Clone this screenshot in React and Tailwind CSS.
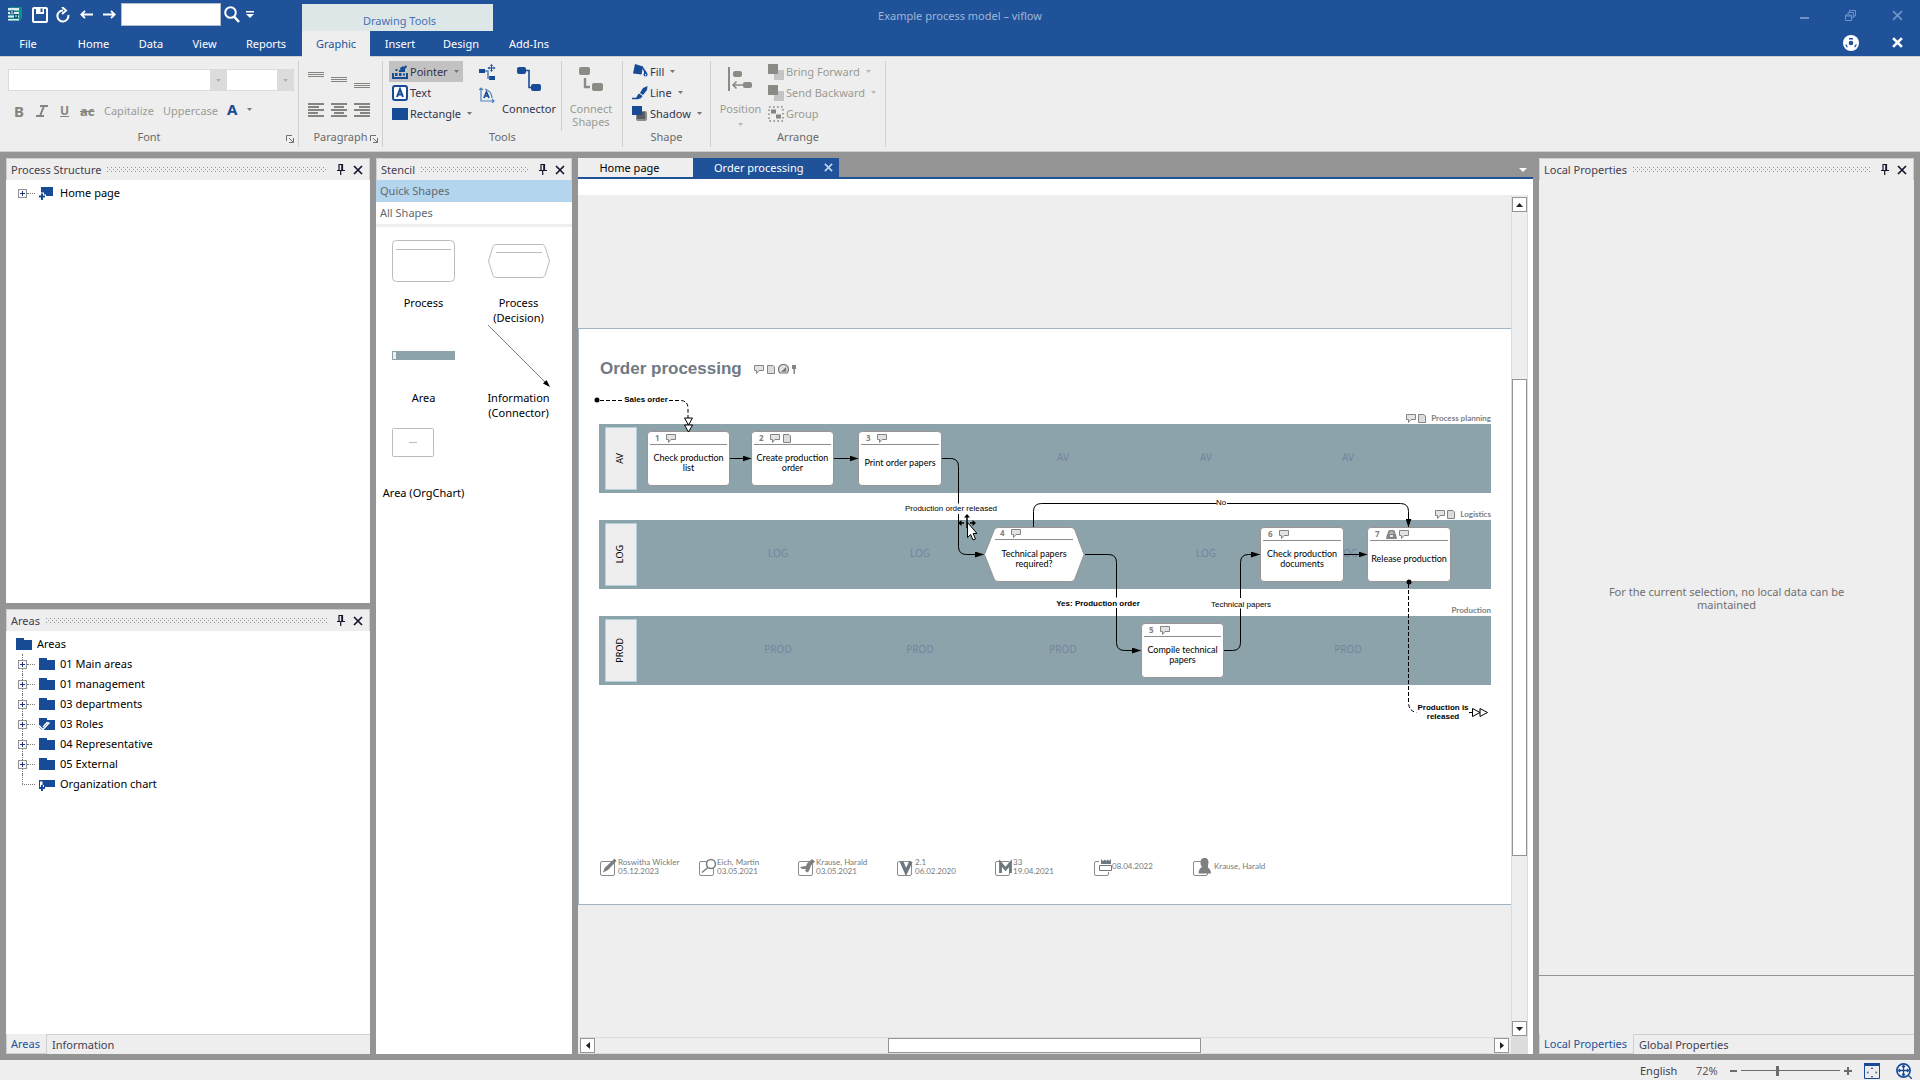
import React from "react";

/* ---------- small shared glyphs ---------- */

function Caret({ className = "text-[#777]" }) {
  return (
    <svg width="5" height="3" viewBox="0 0 5 3" className={`shrink-0 ${className}`} aria-hidden="true">
      <path d="M0 0h5L2.5 3z" fill="currentColor" />
    </svg>
  );
}

function Cross({ size = 9, width = 2, className = "" }) {
  return (
    <svg width={size} height={size} viewBox="0 0 10 10" className={className} aria-hidden="true">
      <path d="M1 1l8 8M9 1l-8 8" stroke="currentColor" strokeWidth={width} fill="none" />
    </svg>
  );
}

function Pin() {
  return (
    <svg width="8" height="11" viewBox="0 0 8 11" aria-hidden="true">
      <path d="M2 6V.5h3.500V6M4.800 1v5M0 6.500h8M3.700 7v4" stroke="#14142c" strokeWidth="1.200" fill="none" />
    </svg>
  );
}

function Launcher() {
  return (
    <button aria-label="More options" className="absolute bottom-0 right-1">
      <svg width="8" height="8" viewBox="0 0 8 8" aria-hidden="true">
        <path d="M.5 6V.5H6M3 3l4 4M7.500 3v4.500H3" stroke="#6f6f6f" fill="none" />
      </svg>
    </button>
  );
}

/* ---------- title bar ---------- */

function QuickAccess() {
  return (
    <div className="flex h-[29px] w-[302px] items-center pl-[7px] text-white">
      <svg width="15" height="15" viewBox="0 0 15 15" className="mr-[10px]" aria-label="viflow">
        <path d="M2 0h13v11l-3 3H2z" fill="#0f8f86" />
        <path d="M1 1h11v2.500H1zM1 5h11v2H1zM1 8.500h11v2H1zM1 12h11v1.500H1z" fill="#d9edf2" />
        <path d="M3 3.500h4v3H3zM7 7h4v4H7z" fill="#17468a" />
        <path d="M4 4.500h2v1H4zM8 8.500h2v1H8z" fill="#fff" />
      </svg>
      <button aria-label="Save" className="mr-2">
        <svg width="16" height="16" viewBox="0 0 16 16" aria-hidden="true">
          <rect x="1" y="1" width="14" height="14" rx="1" fill="none" stroke="#fff" strokeWidth="2" />
          <path d="M4 1h8v6H4z" fill="#fff" />
          <path d="M8.500 1.500h2v3.500h-2z" fill="#20529a" />
        </svg>
      </button>
      <button aria-label="Redo" className="mr-[10px]">
        <svg width="14" height="16" viewBox="0 0 14 16" aria-hidden="true">
          <path d="M7 3.500a5.500 5.500 0 1 0 5.300 4.500M6 0l4 3.500L6 7" stroke="#fff" strokeWidth="2" fill="none" />
        </svg>
      </button>
      <button aria-label="Back" className="mr-[10px]">
        <svg width="13" height="9" viewBox="0 0 13 9" aria-hidden="true">
          <path d="M13 4.500H1.500M5 .8L1.300 4.500 5 8.200" stroke="#fff" strokeWidth="1.800" fill="none" />
        </svg>
      </button>
      <button aria-label="Forward" className="mr-[5px]">
        <svg width="13" height="9" viewBox="0 0 13 9" aria-hidden="true">
          <path d="M0 4.500h11.500M8 .8l3.700 3.700L8 8.200" stroke="#fff" strokeWidth="1.800" fill="none" />
        </svg>
      </button>
      <input aria-label="Search" className="h-[23px] w-[100px] border border-[#b5bccb] bg-white px-1 text-[11px] text-black outline-none" />
      <button aria-label="Find" className="ml-[3px]">
        <svg width="16" height="17" viewBox="0 0 16 17" aria-hidden="true">
          <circle cx="6.500" cy="6.500" r="5.300" fill="none" stroke="#fff" strokeWidth="2" />
          <path d="M10 10.500l5 5.500" stroke="#fff" strokeWidth="2.600" />
        </svg>
      </button>
      <button aria-label="Customize quick access" className="ml-[6px]">
        <svg width="8" height="7" viewBox="0 0 8 7" aria-hidden="true">
          <path d="M0 0h8v1.500H0zM0 3h8L4 7z" fill="#fff" />
        </svg>
      </button>
    </div>
  );
}

function MenuItem({ className, children }) {
  return <button className={`h-[25px] pt-px text-center text-white ${className}`}>{children}</button>;
}

function TitleBar() {
  return (
    <header className="relative bg-[#20529a]">
      <div className="flex h-[31px]">
        <QuickAccess />
        <div className="mt-1 flex h-[27px] w-[191px] items-center justify-center bg-[#dde7e8] pt-[6px] pl-1 text-[#4571b5]">Drawing Tools</div>
        <h1 className="absolute inset-x-0 top-2 mx-auto w-fit text-[#9fb6d6]">Example process model – viflow</h1>
        <div className="ml-auto flex h-[31px] items-center text-[#6f93c6]">
          <button aria-label="Minimize" className="flex w-[46px] justify-center">
            <span className="mt-1 h-[2px] w-[9px] bg-current" />
          </button>
          <button aria-label="Restore" className="flex w-[47px] justify-center">
            <svg width="11" height="11" viewBox="0 0 11 11" aria-hidden="true">
              <path d="M.5 5h6v5.500h-6zM.5 6h6M3 4.500V2.500h5.500v5H7M4.500 2V.5h6V6H9" stroke="currentColor" fill="none" />
            </svg>
          </button>
          <button aria-label="Close" className="flex w-[46px] justify-center">
            <Cross size={11} width={1.6} />
          </button>
        </div>
      </div>
      <div className="flex h-[25px]">
        <MenuItem className="w-14">File</MenuItem>
        <MenuItem className="w-[75px]">Home</MenuItem>
        <MenuItem className="w-10">Data</MenuItem>
        <MenuItem className="w-[67px]">View</MenuItem>
        <MenuItem className="mr-2 w-14">Reports</MenuItem>
        <button className="h-[26px] w-[68px] bg-[#eee] text-center text-[#20529a]">Graphic</button>
        <MenuItem className="w-[60px]">Insert</MenuItem>
        <MenuItem className="w-[62px]">Design</MenuItem>
        <MenuItem className="w-[74px]">Add-Ins</MenuItem>
        <div className="ml-auto flex items-center pb-[2px] text-white">
          <button aria-label="Help" className="flex w-[47px] justify-center">
            <svg width="16" height="16" viewBox="0 0 16 16" aria-hidden="true">
              <circle cx="8" cy="8" r="8" fill="#fff" />
              <circle cx="8" cy="8" r="2.300" fill="#20529a" />
              <path d="M6 3h4v1.500H6zM3 9l1.800 2.500-.8 1.200L2.300 10zM13 9l-1.800 2.500.8 1.200 1.700-2.700z" fill="#20529a" />
            </svg>
          </button>
          <button aria-label="Close document" className="flex w-[46px] justify-center">
            <Cross size={11} width={2.4} />
          </button>
        </div>
      </div>
    </header>
  );
}

/* ---------- ribbon ---------- */

function Group({ label, className, launcher, children }) {
  return (
    <section className={`flex flex-col border-r border-[#cfcfcf] ${className}`}>
      <div className="h-[71px]">{children}</div>
      <div className="relative h-3 text-center leading-3 text-[#6a6a6a]">
        {label}
        {launcher && <Launcher />}
      </div>
    </section>
  );
}

function RowButton({ icon, label, caret, disabled, active }) {
  return (
    <button
      disabled={disabled}
      className={`flex h-[21px] w-fit items-center gap-[2px] whitespace-nowrap pl-[3px] pr-1 ${disabled ? "text-[#9b9b93]" : "text-[#33334a]"} ${active ? "bg-[#c2c2c2]" : ""}`}
    >
      <span className="flex w-4 shrink-0 justify-center">{icon}</span>
      <span className="pr-1">{label}</span>
      {caret && <Caret className={disabled ? "text-[#bfb4bb]" : "text-[#7d7377]"} />}
    </button>
  );
}

function VAlignIcon({ className }) {
  return (
    <svg width="16" height="5" viewBox="0 0 16 5" className={className} aria-hidden="true">
      <path d="M0 .5h16M0 2.500h16M0 4.500h16" stroke="#85857f" />
    </svg>
  );
}

const ALIGN = {
  left: "M0 1h16M0 4h11M0 7h16M0 10h10M0 13h16",
  center: "M0 1h16M3 4h10M0 7h16M3 10h10M0 13h16",
  right: "M0 1h16M5 4h11M0 7h16M6 10h10M0 13h16",
};

function AlignIcon({ side }) {
  return (
    <button aria-label={`Align ${side}`}>
      <svg width="16" height="14" viewBox="0 0 16 14" aria-hidden="true">
        <path d={ALIGN[side]} stroke="#85857f" strokeWidth="1.800" />
      </svg>
    </button>
  );
}

const BLUE = "#174b95";

const PointerIcon = (
  <svg width="16" height="14" viewBox="0 0 16 14" aria-hidden="true">
    <path d="M1 8v5h14V8" stroke={BLUE} strokeWidth="2" fill="none" />
    <path d="M3 8h2.500v3H3zM7 8h2.500v3H7zM3.500 4h2v2h-2zM7 5h2v2H7zM11 8.500h2v2h-2z" fill={BLUE} />
    <path d="M8 3l3-2 1 1 2-2 1 2-2 2v3l-4 0z" fill={BLUE} />
  </svg>
);
const TextIcon = (
  <svg width="16" height="16" viewBox="0 0 16 16" aria-hidden="true">
    <rect x="1" y="1" width="14" height="14" rx="2" fill="#fff" stroke={BLUE} strokeWidth="2" />
    <path d="M5 12l3-8 3 8M6 9.500h4" stroke={BLUE} strokeWidth="2" fill="none" />
  </svg>
);
const RectIcon = (
  <svg width="16" height="12" viewBox="0 0 16 12" aria-hidden="true">
    <path d="M0 0h16v12H0z" fill={BLUE} />
  </svg>
);
const FillIcon = (
  <svg width="16" height="15" viewBox="0 0 16 15" aria-hidden="true">
    <path d="M3 0l8 2.500-1.500 8L1 9.500z" fill={BLUE} />
    <path d="M10 3c2 2 3 4 3 6" stroke={BLUE} strokeWidth="1.500" fill="none" />
    <path d="M13.500 6.500c1.300 2 2 3 2 4a2 2 0 0 1-4 0c0-1 .8-2 2-4z" fill={BLUE} />
    <path d="M13 10h1v1.500h-1z" fill="#fff" />
  </svg>
);
const LineIcon = (
  <svg width="16" height="14" viewBox="0 0 16 14" aria-hidden="true">
    <path d="M15.500 0L15 4l-4 5-3-2 3-5zM7 7.500l3.500 2.500c-1 3-4 3.500-7.500 2.500 2-.5 2-3.500 4-5z" fill={BLUE} />
    <path d="M0 12.500h6" stroke={BLUE} strokeWidth="1.500" />
  </svg>
);
const ShadowIcon = (
  <svg width="16" height="16" viewBox="0 0 16 16" aria-hidden="true">
    <rect x="4" y="5" width="11" height="10" rx="2" fill="#8b8b90" />
    <rect x="5" y="6" width="8" height="7" fill="#5b5b62" />
    <path d="M0 0h10v9H0z" fill={BLUE} />
  </svg>
);
const StackIcon = (
  <svg width="16" height="16" viewBox="0 0 16 16" aria-hidden="true">
    <path d="M6 6h10v10H6z" fill="#c4c3c6" />
    <path d="M0 0h10v10H0z" fill="#8b8b86" />
  </svg>
);
const GroupIcon = (
  <svg width="16" height="16" viewBox="0 0 16 16" aria-hidden="true">
    <rect x="1" y="1" width="14" height="14" fill="none" stroke="#85857f" strokeWidth="1.500" strokeDasharray="1.600 2.400" />
    <path d="M3 3.500h5v4H3zM8 8.500h5v4H8z" fill="#85857f" />
  </svg>
);

function Ribbon() {
  return (
    <div className="flex h-24 shrink-0 border-y border-[#cfcfcf] bg-[#eee] pb-1 pt-1">
      <Group label="Font" className="w-[299px] pb-1" launcher>
        <div className="flex pl-2 pt-2">
          <div className="flex h-[22px] border border-[#dcdcdc] bg-white">
            <input aria-label="Font name" className="w-[201px] px-1 outline-none" />
            <button aria-label="Choose font" className="flex w-4 items-center justify-center bg-[#dcdcdc]">
              <Caret className="text-[#b3b3b3]" />
            </button>
          </div>
          <div className="flex h-[22px] border border-l-0 border-[#dcdcdc] bg-white">
            <input aria-label="Font size" className="w-[50px] px-1 outline-none" />
            <button aria-label="Choose size" className="flex w-4 items-center justify-center bg-[#dcdcdc]">
              <Caret className="text-[#b3b3b3]" />
            </button>
          </div>
        </div>
        <div className="flex items-center pl-[13px] pt-[9px] text-[#85857f]">
          <button aria-label="Bold" className="w-[21px] pl-px text-left text-[15px] font-bold leading-[22px]">B</button>
          <button aria-label="Italic" className="flex w-[26px] pl-[2px]">
            <svg width="12" height="12" viewBox="0 0 12 12" aria-hidden="true">
              <path d="M4 1h8M0 11h8M8 1L4 11" stroke="#85857f" strokeWidth="2" />
            </svg>
          </button>
          <button aria-label="Underline" className="w-5 text-left text-[12px] font-bold leading-[22px] underline">U</button>
          <button aria-label="Strikethrough" className="w-6 text-left text-[13px] font-bold leading-[22px] line-through">ac</button>
          <button className="w-[59px] text-left text-[#9b9b93]">Capitalize</button>
          <button className="w-[64px] text-left text-[#9b9b93]">Uppercase</button>
          <button aria-label="Font color" className="flex items-center gap-[10px] pb-1 text-[15px] font-bold leading-[18px] text-[#174b95]">
            A<Caret />
          </button>
        </div>
      </Group>
      <Group label="Paragraph" className="w-[84px] pb-1" launcher>
        <div className="flex h-8 gap-[7px] pl-[9px] pt-[11px]">
          <button aria-label="Align top" className="h-fit"><VAlignIcon /></button>
          <button aria-label="Align middle" className="h-fit pt-[5px]"><VAlignIcon /></button>
          <button aria-label="Align bottom" className="h-fit pt-[11px]"><VAlignIcon /></button>
        </div>
        <div className="flex gap-[7px] pl-[9px] pt-[10px]">
          <AlignIcon side="left" />
          <AlignIcon side="center" />
          <AlignIcon side="right" />
        </div>
      </Group>
      <Group label="Tools" className="w-[240px] pb-1">
        <div className="flex">
          <div className="w-[90px] pl-[6px]">
            <RowButton active icon={PointerIcon} label="Pointer" caret />
            <RowButton icon={TextIcon} label="Text" />
            <RowButton icon={RectIcon} label="Rectangle" caret />
          </div>
          <div className="flex w-7 flex-col items-center gap-[6px] pt-[3px]">
            <button aria-label="Move connector">
              <svg width="17" height="17" viewBox="0 0 17 17" aria-hidden="true">
                <path d="M0 5h6v4H0zM10 12h6v4h-6z" fill={BLUE} />
                <path d="M6 7h3v7h2" stroke="#4b83bb" strokeWidth="1.500" fill="none" />
                <path d="M12.500 1v6M9.500 4h6" stroke={BLUE} fill="none" />
                <path d="M12.500 0l1.500 2h-3zM12.500 8l1.500-2h-3zM8.500 4l2-1.500v3zM16.500 4l-2-1.500v3z" fill={BLUE} />
              </svg>
            </button>
            <button aria-label="Rotate text">
              <svg width="16" height="16" viewBox="0 0 16 16" aria-hidden="true">
                <path d="M2 1v13h13M0 3l2-2 2 2M13 12l2 2-2 2M6 2a10 10 0 0 1 7 9" stroke="#4b83bb" fill="none" strokeWidth="1.200" />
                <path d="M5 11l2.500-6 2.500 6M6 9h3" stroke={BLUE} strokeWidth="1.700" fill="none" />
              </svg>
            </button>
          </div>
          <button className="flex h-[70px] w-[61px] flex-col items-center border-r border-[#cfcfcf] pr-1 pt-[6px] text-[#33334a]">
            <svg width="24" height="24" viewBox="0 0 24 24" aria-hidden="true">
              <rect x="0" y="0" width="9" height="7" rx="2" fill={BLUE} />
              <rect x="14" y="17" width="10" height="7" rx="2" fill={BLUE} />
              <path d="M9 3.500h3v17h3" stroke={BLUE} strokeWidth="1.600" fill="none" />
            </svg>
            <span className="pt-[11px] leading-[13px]">Connector</span>
          </button>
          <button disabled className="flex h-[70px] w-[58px] flex-col items-center pt-[6px] text-[#9b9b93]">
            <svg width="24" height="24" viewBox="0 0 24 24" aria-hidden="true">
              <rect x="0" y="0" width="11" height="8" rx="2" fill="#8b8b86" />
              <rect x="13" y="16" width="11" height="8" rx="2" fill="#8b8b86" />
              <path d="M6 11v9h5" stroke="#8b8b86" strokeWidth="2.400" fill="none" />
            </svg>
            <span className="pt-[11px] leading-[13px]">Connect<br />Shapes</span>
          </button>
        </div>
      </Group>
      <Group label="Shape" className="w-[88px] pb-1">
        <div className="pl-[6px]">
          <RowButton icon={FillIcon} label="Fill" caret />
          <RowButton icon={LineIcon} label="Line" caret />
          <RowButton icon={ShadowIcon} label="Shadow" caret />
        </div>
      </Group>
      <Group label="Arrange" className="w-[175px] pb-1">
        <div className="flex">
          <button disabled className="flex w-[54px] flex-col items-center pl-[5px] pt-[6px] text-[#9b9b93]">
            <svg width="25" height="24" viewBox="0 0 25 24" aria-hidden="true">
              <path d="M1 0v24" stroke="#8b8b86" strokeWidth="2" />
              <rect x="5" y="4" width="9" height="6" rx="2" fill="#8b8b86" />
              <rect x="15" y="15" width="9" height="6" rx="2" fill="#8b8b86" />
              <path d="M15 18H5M8.500 14.500L5 18l3.500 3.500" stroke="#8b8b86" strokeWidth="1.600" fill="none" />
            </svg>
            <span className="pt-[11px] leading-[13px]">Position</span>
            <Caret className="mt-2 text-[#bfb4bb]" />
          </button>
          <div>
            <RowButton disabled icon={StackIcon} label="Bring Forward" caret />
            <RowButton disabled icon={StackIcon} label="Send Backward" caret />
            <RowButton disabled icon={GroupIcon} label="Group" />
          </div>
        </div>
      </Group>
    </div>
  );
}

/* ---------- side panels ---------- */

function PanelHeader({ title, id }) {
  return (
    <div className="flex h-[22px] shrink-0 items-center border border-b-0 border-[#cfcfcf] bg-[#eee] pl-1 pr-[6px]">
      <h2 className="whitespace-nowrap text-[#44404e]">{title}</h2>
      <svg className="mx-[6px] h-[5px] min-w-0 flex-1" aria-hidden="true">
        <pattern id={id} width="4" height="4" patternUnits="userSpaceOnUse">
          <path d="M0 0h1v1H0zM2 2h1v1H2z" fill="#8f8f8f" />
        </pattern>
        <rect width="100%" height="100%" fill={`url(#${id})`} />
      </svg>
      <button aria-label={`Pin ${title}`} className="mx-1">
        <Pin />
      </button>
      <button aria-label={`Close ${title}`} className="ml-1 text-[#14142c]">
        <Cross size={10} width={1.7} />
      </button>
    </div>
  );
}

function PanelTabs({ active, other }) {
  return (
    <div className="flex h-5 shrink-0 bg-[#eee]">
      <button className="border border-t-0 border-[#cfcfcf] pl-1 pr-[6px] text-[#20529a]">{active}</button>
      <button className="flex-1 border-t border-[#cfcfcf] pl-[5px] text-left text-[#44404e]">{other}</button>
    </div>
  );
}

function Expander() {
  return (
    <button aria-label="Expand" className="relative shrink-0">
      <svg width="9" height="9" viewBox="0 0 9 9" aria-hidden="true">
        <rect x=".5" y=".5" width="8" height="8" fill="#fafafa" stroke="#919191" />
        <path d="M2 4.500h5M4.500 2v5" stroke="#26337f" />
      </svg>
    </button>
  );
}

function TreeIcon({ kind }) {
  return (
    <svg width="16" height="14" viewBox="0 0 16 14" className="shrink-0" aria-hidden="true">
      {kind === "page" && (
        <>
          <path d="M2 1h12v9H2z" fill={BLUE} />
          <path d="M1 6.500h4v2h2v3H0v-3h1z" fill="#fff" />
          <path d="M0 9.500h2v-2h2v2h2v2H4V14H2v-2.500H0z" fill={BLUE} />
        </>
      )}
      {kind === "chart" && (
        <>
          <path d="M0 3h16v7H0z" fill={BLUE} />
          <path d="M1 10V4.500h2.500V8H5v2z" fill="#fff" />
          <path d="M0 10h2V8h2v2h2v2H4v2H2v-2H0z" fill={BLUE} />
        </>
      )}
      {(kind === "folder" || kind === "roles") && <path d="M0 1h8v2h8v10H0z" fill={BLUE} />}
      {kind === "roles" && (
        <>
          <path d="M0 10l4 4H0z" fill="#fff" />
          <path d="M0 8.500l4 4L10 6l-2-.5-4 4.500" stroke="#fff" strokeWidth="1.300" fill="none" />
        </>
      )}
    </svg>
  );
}

const AREAS = [
  { label: "01 Main areas", kind: "folder" },
  { label: "01 management", kind: "folder" },
  { label: "03 departments", kind: "folder" },
  { label: "03 Roles", kind: "roles" },
  { label: "04 Representative", kind: "folder" },
  { label: "05 External", kind: "folder" },
  { label: "Organization chart", kind: "chart", leaf: true },
];

function TreeRow({ item, guide }) {
  return (
    <li className="relative flex h-5 items-center pl-3">
      {guide && (
        <span className={`absolute left-4 top-0 w-px border-l border-dotted border-[#777] ${item.leaf ? "h-[10px]" : "h-5"}`} />
      )}
      {item.leaf ? <span className="w-1" /> : <Expander />}
      <span className={`mr-1 h-px border-t border-dotted border-[#777] ${item.leaf ? "w-[13px]" : "w-2"}`} />
      <TreeIcon kind={item.kind} />
      <span className="pl-[5px] text-black">{item.label}</span>
    </li>
  );
}

function LeftColumn() {
  return (
    <div className="flex w-[364px] shrink-0 flex-col gap-[6px]">
      <section className="flex h-[445px] flex-col bg-white">
        <PanelHeader title="Process Structure" id="grip-structure" />
        <ul className="pt-[3px]">
          <TreeRow item={{ label: "Home page", kind: "page" }} />
        </ul>
      </section>
      <section className="flex min-h-0 flex-1 flex-col bg-white">
        <PanelHeader title="Areas" id="grip-areas" />
        <div className="flex-1 pt-[3px]">
          <div className="flex h-5 items-center pl-[10px] text-black">
            <TreeIcon kind="folder" />
            <span className="pl-[5px]">Areas</span>
          </div>
          <ul>
            {AREAS.map((a) => (
              <TreeRow key={a.label} item={a} guide />
            ))}
          </ul>
        </div>
        <PanelTabs active="Areas" other="Information" />
      </section>
    </div>
  );
}

function StencilItem({ label, iconClass = "pb-[3px]", children }) {
  return (
    <button className="flex h-[95px] flex-col items-center text-center text-black">
      <span className={`flex h-[66px] shrink-0 items-center ${iconClass}`}>{children}</span>
      <span className="w-[86px] leading-[15px]">{label}</span>
    </button>
  );
}

function Stencil() {
  return (
    <section className="flex w-[196px] shrink-0 flex-col bg-white">
      <PanelHeader title="Stencil" id="grip-stencil" />
      <button className="h-[22px] bg-[#b4d5ee] pl-1 text-left text-[#63686e]">Quick Shapes</button>
      <button className="h-[25px] border-b-[3px] border-[#eee] bg-white pl-1 text-left text-[#63686e]">All Shapes</button>
      <div className="grid w-[190px] grid-cols-2 pt-[2px]">
        <StencilItem label="Process">
          <svg width="63" height="42" viewBox="0 0 63 42" aria-hidden="true">
            <rect x=".5" y=".5" width="62" height="41" rx="4" fill="#fff" stroke="#bcbcbc" />
            <path d="M4 9.500h55" stroke="#bcbcbc" />
          </svg>
        </StencilItem>
        <StencilItem label="Process (Decision)">
          <svg width="62" height="34" viewBox="0 0 62 34" aria-hidden="true">
            <path d="M8 .5h46q2 0 3 2l4.500 14.500L57 31.500q-1 2-3 2H8q-2 0-3-2L.5 17 5 2.500q1-2 3-2z" fill="#fff" stroke="#bcbcbc" />
            <path d="M8 8.500h46" stroke="#bcbcbc" />
          </svg>
        </StencilItem>
        <StencilItem label="Area">
          <svg width="63" height="9" viewBox="0 0 63 9" aria-hidden="true">
            <path d="M0 0h63v9H0z" fill="#8ca3ab" />
            <path d="M1 1h3v7H1z" fill="#eee" />
          </svg>
        </StencilItem>
        <StencilItem label="Information (Connector)">
          <svg width="62" height="62" viewBox="0 0 62 62" aria-hidden="true">
            <path d="M0 0l60 60" stroke="#7d7d7d" />
            <path d="M62 62l-7-3.500 3.500-3.500z" fill="#000" />
          </svg>
        </StencilItem>
        <StencilItem label="Area (OrgChart)" iconClass="self-start pb-5 pl-4">
          <svg width="42" height="29" viewBox="0 0 42 29" aria-hidden="true">
            <rect x=".5" y=".5" width="41" height="28" rx="1" fill="#fff" stroke="#bcbcbc" />
            <path d="M17 14.500h8" stroke="#bcbcbc" />
          </svg>
        </StencilItem>
      </div>
    </section>
  );
}

/* ---------- diagram (coordinates are in page units, origin at the sheet's corner) ---------- */

const Speech = ({ className }) => (
  <svg width="10" height="9" viewBox="0 0 10 9" className={className} aria-hidden="true">
    <path d="M.5.500h9v5H5L2.500 8.500V5.500h-2z" fill="#e3e3e3" stroke="#858585" />
  </svg>
);
const Doc = ({ className }) => (
  <svg width="8" height="9" viewBox="0 0 8 9" className={className} aria-hidden="true">
    <path d="M.5.500h5.500l1.500 1.500v6.500h-7z" fill="#dcdcdc" stroke="#858585" />
  </svg>
);
const Lock = () => (
  <svg width="11" height="9" viewBox="0 0 11 9" aria-hidden="true">
    <path d="M2.500 4V2.500Q3 .5 5.500.5T8.500 2.500V4" fill="#b5b5b5" stroke="#858585" strokeWidth="1.600" />
    <path d="M0 9l1-5h9L11 9z" fill="#858585" />
    <path d="M4 5h3v2H4z" fill="#e3e3e3" />
  </svg>
);

const LANES = [
  { top: 96, code: "AV", title: "Process planning", icons: true, marks: [485, 628, 770] },
  { top: 192, code: "LOG", title: "Logistics", icons: true, marks: [200, 342, 628, 770] },
  { top: 288, code: "PROD", title: "Production", icons: false, marks: [200, 342, 485, 770] },
];

function Lane({ lane }) {
  return (
    <div className="absolute left-[21px] h-[69px] w-[892px] bg-[#8ca3ab]" style={{ top: lane.top }}>
      <div className="absolute left-[6px] top-[3px] flex h-[63px] w-8 items-center justify-center rounded-[1px] border border-[#b3d0d8] bg-[#eee] pr-1">
        <span className="rotate-180 text-[9px] leading-none text-black [writing-mode:vertical-rl]">{lane.code}</span>
      </div>
      {lane.marks.map((x) => (
        <span
          key={x}
          className="absolute top-[26px] w-10 text-center text-[10px] leading-[14px] text-[#74849f]"
          style={{ left: x - 41 }}
        >
          {lane.code}
        </span>
      ))}
      <div className="absolute bottom-full right-0 flex h-3 items-center gap-[2px] font-['Lato','Noto_Sans',sans-serif] text-[8px] font-bold leading-3 text-[#7d7f82]">
        {lane.icons && <Speech />}
        {lane.icons && <Doc className="mr-[3px]" />}
        <span>{lane.title}</span>
      </div>
    </div>
  );
}

const STEPS = [
  { n: 1, x: 69, y: 103, w: 83, label: "Check production list" },
  { n: 2, x: 173, y: 103, w: 83, label: "Create production order", doc: true },
  { n: 3, x: 280, y: 103, w: 84, label: "Print order papers" },
  { n: 4, x: 405, y: 199, w: 102, label: "Technical papers required?", decision: true },
  { n: 5, x: 563, y: 295, w: 83, label: "Compile technical papers" },
  { n: 6, x: 682, y: 199, w: 84, label: "Check production documents" },
  { n: 7, x: 789, y: 199, w: 84, label: "Release production", lock: true },
];

function Step({ s }) {
  const frame = s.decision ? "px-3" : "rounded-[4px] border border-[#9a9493] bg-white px-[2px]";
  return (
    <div className={`absolute flex h-[55px] flex-col ${frame}`} style={{ left: s.x, top: s.y, width: s.w }}>
      {s.decision && (
        <svg width="102" height="55" viewBox="0 0 102 55" className="absolute left-0 top-0" aria-hidden="true">
          <path d="M15 .5h73q3 0 4 3l9 24-9 24q-1 3-4 3H15q-3 0-4-3l-9.500-24L11 3.500q1-3 4-3z" fill="#fff" stroke="#9a9493" />
        </svg>
      )}
      <div className="relative flex h-[13px] shrink-0 items-center gap-[2px] border-b border-[#8c8c8c] pl-[5px] text-[8px] font-bold leading-3 text-[#7d7f82]">
        <span className="w-[9px]">{s.n}</span>
        {s.lock && <Lock />}
        <Speech />
        {s.doc && <Doc className="ml-px" />}
      </div>
      <div className="relative flex flex-1 items-center justify-center pb-1 text-center font-['Lato','Noto_Sans',sans-serif] text-[9px] leading-[10px] text-black">
        {s.label}
      </div>
    </div>
  );
}

function FlowLabel({ x, y, w, bold, children }) {
  return (
    <span
      className={`absolute text-center font-['Liberation_Sans',sans-serif] text-[8px] leading-[9px] text-black ${bold ? "font-bold" : ""}`}
      style={{ left: x, top: y, width: w }}
    >
      {children}
    </span>
  );
}

function Connectors() {
  return (
    <svg width="933" height="576" viewBox="0 0 933 576" className="absolute left-0 top-0" aria-hidden="true">
      <defs>
        <marker id="tip" markerWidth="9" markerHeight="6" refX="8.500" refY="3" orient="auto" markerUnits="userSpaceOnUse">
          <path d="M0 0l9 3-9 3z" />
        </marker>
      </defs>
      <g fill="none" stroke="#000">
        <path d="M152 130.500h21" markerEnd="url(#tip)" />
        <path d="M256 130.500h24" markerEnd="url(#tip)" />
        <path d="M364 130.500h8.500q8 0 8 8v37M380.500 186v32.500q0 8 8 8h17" markerEnd="url(#tip)" />
        <path d="M455.500 199v-15.500q0-8 8-8h175M649 175.500h173.500q8 0 8 8V199" markerEnd="url(#tip)" />
        <path d="M507 226.500h23.500q8 0 8 8v35M538.500 280v34.500q0 8 8 8h16" markerEnd="url(#tip)" />
        <path d="M646 322.500h8.500q8 0 8-8v-34M662.500 270v-35.500q0-8 8-8h11" markerEnd="url(#tip)" />
        <path d="M766 226.500h23" markerEnd="url(#tip)" />
        <path d="M22 72.500h24M91 72.500h11q8 0 8 8v10" strokeDasharray="4 2" />
        <path d="M830.500 256v118q0 9 8 10.500" strokeDasharray="4 2" />
        <path d="M891 384.500h3M894.500 380.500v8l7.500-4zM902 380.500v8l7.500-4z" />
      </g>
      <circle cx="19" cy="72" r="2.500" />
    </svg>
  );
}

/* End points that overlap the step boxes. */
function ConnectorEnds() {
  return (
    <svg width="933" height="576" viewBox="0 0 933 576" className="absolute left-0 top-0" aria-hidden="true">
      <path d="M106.500 90h8l-4 7zM106.500 97h8l-4 7z" fill="#fff" stroke="#000" />
      <circle cx="831" cy="254" r="2.500" />
    </svg>
  );
}

const Frame = ({ children }) => (
  <svg width="18" height="18" viewBox="0 0 18 18" className="shrink-0" aria-hidden="true">
    <rect x=".5" y="3.500" width="14" height="14" rx="1.500" fill="#fff" stroke="#8a8a86" />
    {children}
  </svg>
);

const FOOTER = [
  {
    x: 22, lines: ["Roswitha Wickler", "05.12.2023"],
    art: <path d="M3 14.500l1.500-4.500L13 2l1.500-1.500L16.500 3 8 12z" fill="#7d7f80" />,
  },
  {
    x: 121, lines: ["Eich, Martin", "03.05.2021"],
    art: <path d="M9 9.500l-6 5M16.500 6a4.500 4.500 0 1 1-9 0 4.500 4.500 0 0 1 9 0z" fill="#fff" stroke="#7d7f80" strokeWidth="1.600" />,
  },
  {
    x: 220, lines: ["Krause, Harald", "03.05.2021"],
    art: <path d="M2 9l6-1 1-2.500L14 1l3 2.500-4 4-1 3-2 4L7 13l1-2-4 0z" fill="#7d7f80" />,
  },
  {
    x: 319, lines: ["2.1", "06.02.2020"],
    art: <path d="M4.500 3.500L9 14l5-10.500" stroke="#6c7880" strokeWidth="3.400" fill="none" />,
  },
  {
    x: 417, lines: ["33", "19.04.2021"],
    art: <path d="M5.500 15V5l5 6 5-6v10" stroke="#6c7880" strokeWidth="2.800" fill="none" />,
  },
  {
    x: 516, lines: ["08.04.2022"],
    art: (
      <>
        <path d="M5 1h13v13H5z" fill="#fff" />
        <path d="M7 1v5h10V1l-2 2-1-1.500-2 1.500-1-1.500L9 3z" fill="#6c7880" />
        <path d="M5.500 7.500h12v5h-12z" fill="#fff" stroke="#6c7880" />
      </>
    ),
  },
  {
    x: 615, gap: "pl-[3px]", lines: ["Krause, Harald"],
    art: (
      <path d="M11.500 0c3 0 4 2 4 4.500 0 2-1 4-1.500 4.500 2 1 4 3 4 6.500H5.500c0-3.500 1.500-5.500 3.500-6.500C8 8 7.500 6 7.500 4.500 7.500 2 8.500 0 11.500 0z" fill="#7d7f80" />
    ),
  },
];

function Sheet() {
  return (
    <div className="relative mt-[133px] h-[577px] overflow-hidden bg-white shadow-[inset_1px_1px_0_#9fb4c4,inset_0_-1px_0_#9fb4c4]">
      <div className="absolute left-[22px] top-[31px] flex items-center font-['Liberation_Sans',sans-serif]">
        <h2 className="text-[17px] font-bold leading-5 text-[#707a84]">Order processing</h2>
        <span className="flex items-center gap-[3px] pl-[12px]">
          <Speech />
          <Doc />
          <svg width="11" height="10" viewBox="0 0 11 10" aria-hidden="true">
            <path d="M2 9A5 5 0 1 1 9 9z" fill="#e3e3e3" stroke="#757575" strokeWidth="1.200" />
            <path d="M3 8l5-5 .5 4.500z" fill="#757575" />
          </svg>
          <svg width="4" height="9" viewBox="0 0 4 9" aria-hidden="true">
            <path d="M0 0h4v4H3v5H1.500V4H0z" fill="#858585" />
          </svg>
        </span>
      </div>
      {LANES.map((l) => (
        <Lane key={l.code} lane={l} />
      ))}
      <Connectors />
      {STEPS.map((s) => (
        <Step key={s.n} s={s} />
      ))}
      <ConnectorEnds />
      <FlowLabel x={38} y={67} w={60} bold>Sales order</FlowLabel>
      <FlowLabel x={323} y={176} w={100}>Production order released</FlowLabel>
      <FlowLabel x={633} y={170} w={20}>No</FlowLabel>
      <FlowLabel x={465} y={271} w={110} bold>Yes: Production order</FlowLabel>
      <FlowLabel x={623} y={272} w={80}>Technical papers</FlowLabel>
      <FlowLabel x={837} y={375} w={56} bold>Production is released</FlowLabel>
      <svg width="19" height="27" viewBox="0 0 19 27" className="absolute left-[380px] top-[186px]" aria-hidden="true">
        <path d="M9 2v12M2 9h4M12 9h4" stroke="#000" strokeWidth="1.500" fill="none" />
        <path d="M9 0l3 3.500H6zM0 9l3.500-3v6zM18 9l-3.500-3v6z" />
        <path d="M9.500 8.500v15l3.200-3 2.300 5.500 2.500-1-2.300-5.500h3.800z" fill="#fff" stroke="#000" />
      </svg>
      {FOOTER.map((f) => (
        <div
          key={f.x}
          className="absolute top-[529px] flex h-[19px] items-center font-['Lato','Noto_Sans',sans-serif] text-[8px] leading-[9px] text-[#77797b]"
          style={{ left: f.x }}
        >
          <Frame>{f.art}</Frame>
          <span className={`whitespace-nowrap ${f.gap ?? ""}`}>
            {f.lines.map((t) => (
              <span key={t} className="block">{t}</span>
            ))}
          </span>
        </div>
      ))}
    </div>
  );
}

const ARROWS = {
  up: "M0 4h7L3.500 0z",
  down: "M0 0h7L3.500 4z",
  left: "M4 0v7L0 3.500z",
  right: "M0 0v7L4 3.500z",
};

function ScrollButton({ dir }) {
  const vertical = dir === "up" || dir === "down";
  return (
    <button aria-label={`Scroll ${dir}`} className="flex size-[15px] shrink-0 items-center justify-center border border-[#949494] bg-white">
      <svg width={vertical ? 7 : 4} height={vertical ? 4 : 7} aria-hidden="true">
        <path d={ARROWS[dir]} fill="#222" />
      </svg>
    </button>
  );
}

function DocumentArea() {
  return (
    <main className="flex min-w-0 flex-1 flex-col bg-white">
      <div className="flex h-[21px] shrink-0 border-b-2 border-[#20529a] bg-[#949494]">
        <button className="w-[115px] bg-[#eee] pr-3 text-black">Home page</button>
        <div className="flex w-[146px] items-center justify-between bg-[#20529a] pl-[21px] pr-[6px] text-white">
          <button>Order processing</button>
          <button aria-label="Close Order processing" className="text-[#c3d5ea]">
            <Cross size={9} width={1.8} />
          </button>
        </div>
        <button aria-label="List documents" className="ml-auto mr-[6px] pt-1 text-white">
          <svg width="8" height="4" viewBox="0 0 8 4" aria-hidden="true">
            <path d="M0 0h8L4 4z" fill="currentColor" />
          </svg>
        </button>
      </div>
      <div className="mr-[5px] mt-4 flex min-h-0 flex-1">
        <div className="flex min-w-0 flex-1 flex-col bg-[#eee]">
          <div className="min-h-0 flex-1 overflow-hidden">
            <Sheet />
          </div>
          <div className="flex h-[17px] shrink-0 border-y border-[#dcdcdc] bg-[#eee] px-[2px]">
            <ScrollButton dir="left" />
            <div className="min-w-0 flex-[293]" />
            <div className="h-[15px] min-w-0 flex-[312] border border-[#949494] bg-white" />
            <div className="min-w-0 flex-[293]" />
            <ScrollButton dir="right" />
          </div>
        </div>
        <div className="flex w-[17px] flex-col items-center border-x border-[#dcdcdc] bg-[#eee] pt-[2px]">
          <ScrollButton dir="up" />
          <div className="flex-[167]" />
          <div className="w-[15px] flex-[476] border border-[#949494] bg-white" />
          <div className="flex-[165]" />
          <ScrollButton dir="down" />
          <div className="h-[18px] w-[17px] shrink-0 bg-[#dcdcdc]" />
        </div>
      </div>
    </main>
  );
}

function Properties() {
  return (
    <section className="flex w-[375px] shrink-0 flex-col bg-[#eee]">
      <PanelHeader title="Local Properties" id="grip-properties" />
      <div className="flex flex-1 items-center justify-center px-14 pt-10">
        <p className="w-[256px] text-center leading-[13px] text-[#6f6f6f]">
          For the current selection, no local data can be maintained
        </p>
      </div>
      <div className="h-[59px] border-t border-[#949494]" />
      <PanelTabs active="Local Properties" other="Global Properties" />
    </section>
  );
}

function StatusBar() {
  return (
    <footer className="flex h-5 shrink-0 items-center justify-end bg-[#eee] pr-2 pt-px text-[#5a565e]">
      <button className="w-14 text-left text-[#44404e]">English</button>
      <span className="w-[34px]">72%</span>
      <button aria-label="Zoom out" className="h-[2px] w-[7px] bg-[#6b6b6b]" />
      <input
        type="range"
        aria-label="Zoom"
        min="0"
        max="100"
        defaultValue="36"
        className="mx-1 h-3 w-[99px] appearance-none bg-[linear-gradient(#6b6b6b,#6b6b6b)] bg-[length:100%_1px] bg-center bg-no-repeat [&::-webkit-slider-thumb]:h-[10px] [&::-webkit-slider-thumb]:w-[3px] [&::-webkit-slider-thumb]:appearance-none [&::-webkit-slider-thumb]:bg-[#6b6b6b]"
      />
      <button aria-label="Zoom in" className="mr-3">
        <svg width="8" height="8" viewBox="0 0 8 8" aria-hidden="true">
          <path d="M4 0v8M0 4h8" stroke="#6b6b6b" strokeWidth="2" />
        </svg>
      </button>
      <button aria-label="Fit window" className="mr-4">
        <svg width="16" height="16" viewBox="0 0 16 16" aria-hidden="true">
          <path d="M.5.500h15v15H.5z" fill="none" stroke={BLUE} />
          <path d="M0 0h16v3H0z" fill={BLUE} />
          <path d="M8 4l1.500 2h-3zM8 15l1.500-2h-3zM2.500 9.500l2-1.500v3zM13.500 9.500l-2-1.500v3z" fill="#3d6fae" />
        </svg>
      </button>
      <button aria-label="Pan and zoom">
        <svg width="16" height="16" viewBox="0 0 16 16" aria-hidden="true">
          <circle cx="7.500" cy="7.500" r="6.600" fill="#fff" stroke={BLUE} strokeWidth="1.700" />
          <path d="M7.500 2.500v10M2.500 7.500h10M6 4l1.500-1.500L9 4M6 11l1.500 1.500L9 11M4 6L2.500 7.500 4 9M11 6l1.500 1.500L11 9M12.500 12.500L16 16" stroke={BLUE} strokeWidth="1.400" fill="none" />
        </svg>
      </button>
    </footer>
  );
}

export default function App() {
  return (
    <div className="flex h-screen flex-col overflow-hidden bg-[#949494] font-['Noto_Sans','Open_Sans',sans-serif] text-[11px] leading-4">
      <TitleBar />
      <Ribbon />
      <div className="flex min-h-0 flex-1 gap-[6px] p-[6px]">
        <LeftColumn />
        <Stencil />
        <DocumentArea />
        <Properties />
      </div>
      <StatusBar />
    </div>
  );
}
